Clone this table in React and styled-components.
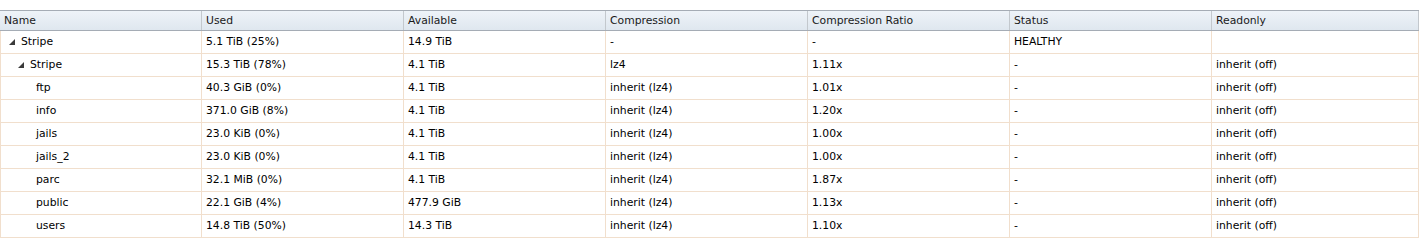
import React from "react";
import styled, { createGlobalStyle } from "styled-components";

const COLUMNS = ["Name", "Used", "Available", "Compression", "Compression Ratio", "Status", "Readonly"];

const ROWS = [
  { name: "Stripe", level: 0, open: true, cells: ["5.1 TiB (25%)", "14.9 TiB", "-", "-", "HEALTHY", ""] },
  { name: "Stripe", level: 1, open: true, cells: ["15.3 TiB (78%)", "4.1 TiB", "lz4", "1.11x", "-", "inherit (off)"] },
  { name: "ftp", level: 2, cells: ["40.3 GiB (0%)", "4.1 TiB", "inherit (lz4)", "1.01x", "-", "inherit (off)"] },
  { name: "info", level: 2, cells: ["371.0 GiB (8%)", "4.1 TiB", "inherit (lz4)", "1.20x", "-", "inherit (off)"] },
  { name: "jails", level: 2, cells: ["23.0 KiB (0%)", "4.1 TiB", "inherit (lz4)", "1.00x", "-", "inherit (off)"] },
  { name: "jails_2", level: 2, cells: ["23.0 KiB (0%)", "4.1 TiB", "inherit (lz4)", "1.00x", "-", "inherit (off)"] },
  { name: "parc", level: 2, cells: ["32.1 MiB (0%)", "4.1 TiB", "inherit (lz4)", "1.87x", "-", "inherit (off)"] },
  { name: "public", level: 2, cells: ["22.1 GiB (4%)", "477.9 GiB", "inherit (lz4)", "1.13x", "-", "inherit (off)"] },
  { name: "users", level: 2, cells: ["14.8 TiB (50%)", "14.3 TiB", "inherit (lz4)", "1.10x", "-", "inherit (off)"] },
];

// indent before the arrow (or the name, for leaves)
const INDENT = [8, 17, 35];

const GlobalStyle = createGlobalStyle`
  body {
    margin: 0;
    background: #fff;
    font-family: "DejaVu Sans", Verdana, sans-serif;
    font-size: 10.8px;
    color: #000;
  }
`;

const Grid = styled.div`
  width: 1419px;
  padding-top: 10px;
`;

const HeaderRow = styled.div`
  display: grid;
  grid-template-columns: repeat(6, 202px) 1fr;
  height: 19px;
  border-top: 1px solid #a5acb5;
  border-bottom: 1px solid #a5acb5;
  background: linear-gradient(#eef3f8, #dfe7ef);
`;

const HeaderCell = styled.div`
  display: flex;
  align-items: center;
  padding-left: 4px;
  border-right: 1px solid #c3c8cd;
  color: #1a1a1a;
  white-space: nowrap;
  overflow: hidden;
`;

const Row = styled.div`
  display: grid;
  grid-template-columns: repeat(6, 202px) 1fr;
  height: 22px;
  border-bottom: 1px solid #f1dfcd;
`;

const Cell = styled.div`
  display: flex;
  align-items: center;
  padding-left: ${(p) => (p.$first ? 0 : 4)}px;
  padding-bottom: 1px;
  border-right: 1px solid #f1dfcd;
  border-left: ${(p) => (p.$first ? "1px solid #f1dfcd" : "none")};
  white-space: nowrap;
  overflow: hidden;
`;

const Indent = styled.span`
  display: inline-block;
  flex: none;
  width: ${(p) => p.$width}px;
`;

const Toggle = styled.span`
  display: inline-flex;
  align-items: center;
  width: 12px;
  flex: none;
`;

const TreeNode = ({ row }) => (
  <>
    <Indent $width={INDENT[row.level]} />
    {row.open && (
      <Toggle>
        <svg width="6" height="6" viewBox="0 0 6 6">
          <path d="M6 0 L6 6 L0 6 Z" fill="#3a3a3a" />
        </svg>
      </Toggle>
    )}
    <span>{row.name}</span>
  </>
);

export default function App() {
  return (
    <>
      <GlobalStyle />
      <Grid>
        <HeaderRow>
          {COLUMNS.map((c) => (
            <HeaderCell key={c}>{c}</HeaderCell>
          ))}
        </HeaderRow>
        {ROWS.map((row, i) => (
          <Row key={i}>
            <Cell $first>
              <TreeNode row={row} />
            </Cell>
            {row.cells.map((v, j) => (
              <Cell key={j}>{v}</Cell>
            ))}
          </Row>
        ))}
      </Grid>
    </>
  );
}
